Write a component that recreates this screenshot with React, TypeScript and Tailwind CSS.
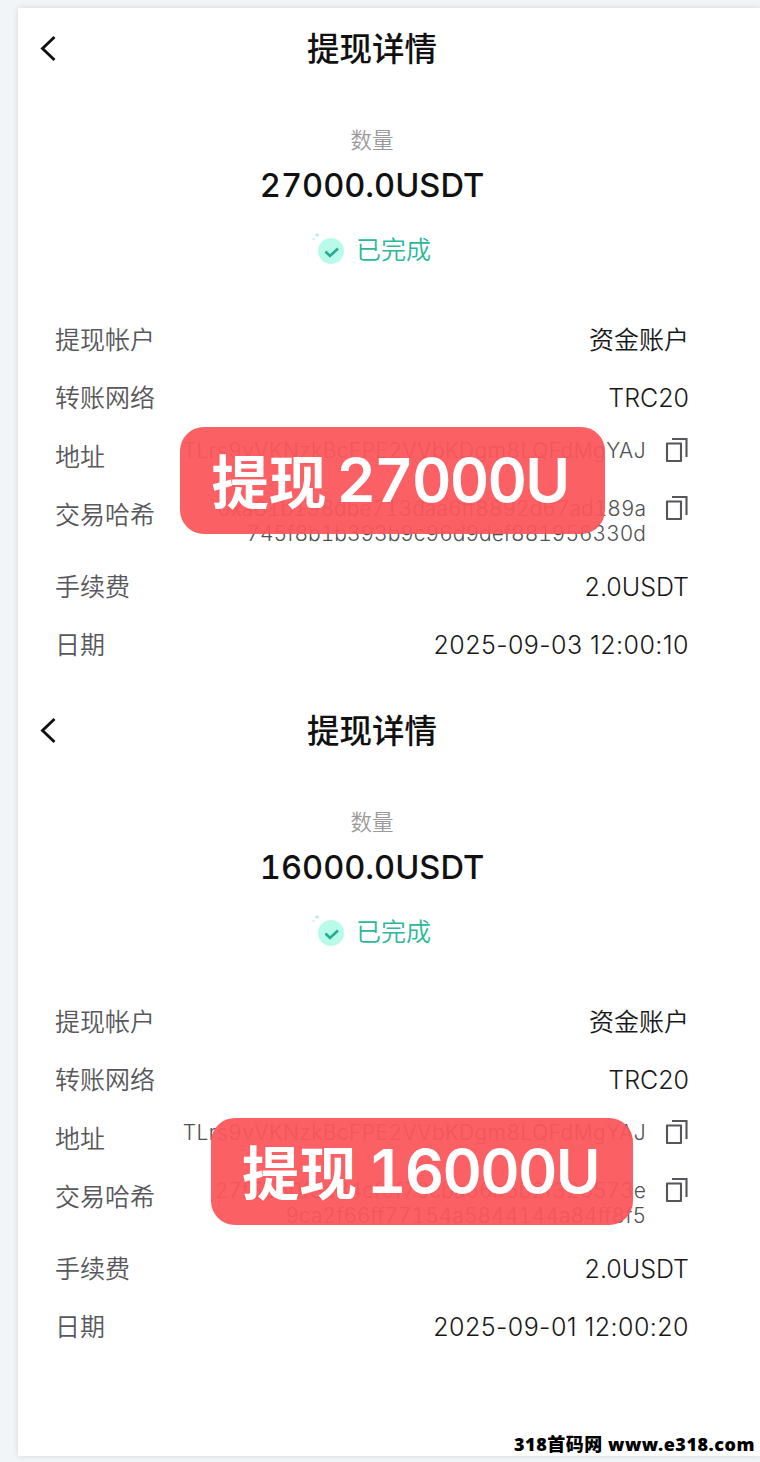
import React from 'react';

interface Withdrawal {
  id: string;
  amount: string;
  account: string;
  network: string;
  address: string;
  hash: string[];
  fee: string;
  date: string;
  stamp: string;
  stampClass: string;
}

const withdrawals: Withdrawal[] = [
  {
    id: 'w-27000',
    amount: '27000.0USDT',
    account: '资金账户',
    network: 'TRC20',
    address: 'TLrs9vVKNzkBcFPE2VVbKDgm8LQFdMgYAJ',
    hash: ['0xa81b198dbe713daa6ff8892d67ad189a', '745f8b1b393b9c96d9def881956330d'],
    fee: '2.0USDT',
    date: '2025-09-03 12:00:10',
    stamp: '27000U',
    stampClass: 'left-[162px] top-[419px] w-[425px] pr-[5px]',
  },
  {
    id: 'w-16000',
    amount: '16000.0USDT',
    account: '资金账户',
    network: 'TRC20',
    address: 'TLrs9vVKNzkBcFPE2VVbKDgm8LQFdMgYAJ',
    hash: ['27f5b60f5c84cf0f70cba66b5b2f326573e', '9ca2f66ff77154a5844144a84ff8f5'],
    fee: '2.0USDT',
    date: '2025-09-01 12:00:20',
    stamp: '16000U',
    stampClass: 'left-[193px] top-[428px] w-[422px] pr-[3px]',
  },
];

const BackIcon = () => (
  <svg width="18" height="28" viewBox="0 0 18 28" fill="none">
    <path d="M15.5 2 3.5 13.5 15.5 25" stroke="#111" strokeWidth="2.9" />
  </svg>
);

const CopyIcon = () => (
  <svg width="24" height="26" viewBox="0 0 24 26" fill="none" stroke="#55555a" strokeWidth="2.1">
    <path d="M2 6.500h14v17.500H2z" strokeLinejoin="round" />
    <path d="M7 2h14.500v18" />
  </svg>
);

const DoneIcon = () => (
  <svg width="36" height="34" viewBox="0 0 36 34" fill="none">
    <circle cx="19" cy="21" r="13" fill="#b9fbea" />
    <circle cx="5" cy="5" r="1.800" fill="#b4f0e0" />
    <circle cx="1.500" cy="9" r="1.300" fill="#c9f5ea" />
    <path d="m13.500 21.500 4.500 4.500 8-7.500" stroke="#25ad8d" strokeWidth="2.600" />
  </svg>
);

const Row = ({ label, children }: { label: string; children: React.ReactNode }) => (
  <div className="flex h-[58px] items-center justify-between">
    <span className="text-[25px] font-[350] text-[#58585c]">{label}</span>
    <span className="text-[25px] font-[350] text-[#18181a]">{children}</span>
  </div>
);

const CopyRow = ({ label, lines, className }: { label: string; lines: React.ReactNode[]; className: string }) => (
  <div className={`flex items-start justify-between ${className}`}>
    <span className="text-[25px] leading-[58px] font-[350] text-[#58585c]">{label}</span>
    <div className="-mt-[1px] flex items-start gap-[19px] pt-[10px]">
      <div className="pt-[1px] text-right text-[21px] leading-[25px] font-light tabular-nums text-[#505054]">
        {lines.map((line, i) => (
          <div key={i}>{line}</div>
        ))}
      </div>
      <CopyIcon />
    </div>
  </div>
);

const WithdrawalDetail = ({ item }: { item: Withdrawal }) => (
  <section className="relative h-[682px] pr-[71px] pl-[37px]">
    <header className="flex h-[82px] items-center">
      <button className="-ml-[16px] w-[34px]">
        <BackIcon />
      </button>
      <h1 className="flex-1 pt-[2px] pr-[18px] text-center text-[32.5px] font-medium text-[#111]">提现详情</h1>
    </header>

    <div className="flex h-[222px] flex-col items-center pt-[34px]">
      <span className="text-[21.5px] leading-[32px] font-[350] text-[#9a9a9a]">数量</span>
      <span className="mt-[9px] text-[32.6px] leading-[40px] font-medium tabular-nums text-[#111]">{item.amount}</span>
      <div className="mt-[25px] flex h-[34px] items-center gap-[8px] pr-[1px]">
        <DoneIcon />
        <span className="pt-[7px] text-[25px] font-[350] text-[#2cb899]">已完成</span>
      </div>
    </div>

    <Row label="提现帐户">{item.account}</Row>
    <Row label="转账网络">{item.network}</Row>
    <CopyRow
      label="地址"
      lines={[<span className="tracking-[0.45px]">{item.address}</span>]}
      className="h-[58px]"
    />
    <CopyRow label="交易哈希" lines={item.hash} className="h-[73px]" />
    <Row label="手续费">{item.fee}</Row>
    <Row label="日期">
      <span className="tracking-[0.44px]">{item.date}</span>
    </Row>

    <div
      className={`absolute flex h-[107px] items-center justify-center gap-[10px] rounded-[24px] bg-[#fa565a]/94 text-white ${item.stampClass}`}
    >
      <span className="pt-[5px] text-[57.5px] font-semibold">提现</span>
      <span className="text-[61px] font-[580] tracking-[-1.7px] tabular-nums">{item.stamp}</span>
    </div>
  </section>
);

const App = () => {
  return (
    <div className="h-[1462px] bg-[#f2f5f8] pt-[8px] pl-[18px] font-['Inter','Noto_Sans_CJK_SC',sans-serif]">
      <main className="flex h-[1448px] flex-col bg-white shadow-[0_0_6px_rgba(0,0,0,0.12)]">
        {withdrawals.map((item) => (
          <WithdrawalDetail key={item.id} item={item} />
        ))}
        <footer className="mt-auto pr-[5px] text-right font-['Noto_Sans','Noto_Sans_CJK_SC',sans-serif] text-[18px] leading-[24px] font-black tracking-[0.52px] whitespace-nowrap text-black">
          318首码网 www.e318.com
        </footer>
      </main>
    </div>
  );
};

export default App;
